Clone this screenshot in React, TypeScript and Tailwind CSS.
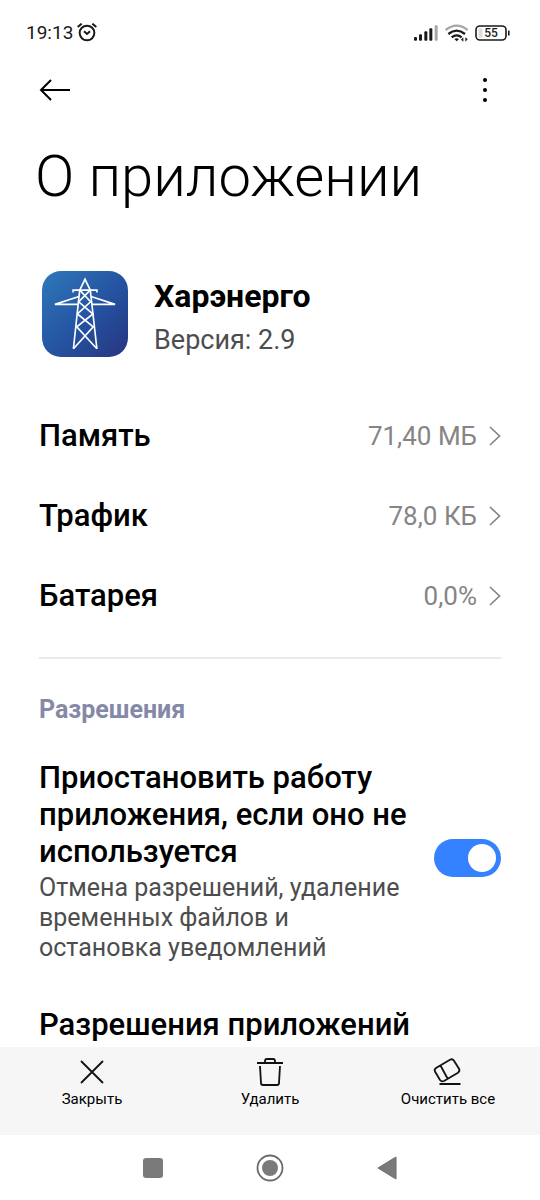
import { useState } from 'react'

const usage = [
  { label: 'Память', value: '71,40 МБ' },
  { label: 'Трафик', value: '78,0 КБ' },
  { label: 'Батарея', value: '0,0%' },
]

function StatusBar() {
  return (
    <div className="flex h-[66px] items-center justify-between pl-[26px] pr-[30px]">
      <div className="flex items-center gap-[3px]">
        <span className="text-[19px] leading-6 text-[#1a1a1a]">19:13</span>
        <svg width="22" height="20" viewBox="228 42 66 60" fill="none" stroke="#1a1a1a" strokeWidth="6">
          <circle cx="261" cy="72" r="22" />
          <path d="M233 54l12-10M289 54l-12-10M252 67l9 8 9-8" />
        </svg>
      </div>
      <div className="flex items-center gap-[7px]">
        <svg width="24" height="16" viewBox="104 46 72 48" fill="#1a1a1a">
          <rect x="104" y="82" width="9" height="11" rx="3" />
          <rect x="119" y="74" width="9" height="19" rx="3" />
          <rect x="135" y="65" width="9" height="28" rx="3" />
          <rect x="150" y="56" width="9" height="37" rx="3" />
          <rect x="166" y="47" width="9" height="46" rx="3" fill="#a6a6a6" />
        </svg>
        <svg width="23" height="18" viewBox="195 43 69 54" fill="none" strokeWidth="7">
          <path d="M197 61Q230 35 263 61" stroke="#a6a6a6" />
          <path d="M205 73Q230 53 255 73" stroke="#1a1a1a" />
          <path d="M215 83Q230 71 245 83" stroke="#1a1a1a" />
          <path d="M223 88q7-5 14 0l-7 7z" fill="#1a1a1a" />
          <path d="M243 90l7-7v13zM263 89l-7-6v13z" fill="#1a1a1a" />
        </svg>
        <svg width="35" height="16" viewBox="0 0 35 16">
          <rect x="1" y="1" width="30" height="14" rx="4" fill="none" stroke="#1a1a1a" strokeWidth="1.6" />
          <rect x="3.5" y="3.5" width="4" height="9" rx="1" fill="#dcdcdc" />
          <rect x="33" y="5.5" width="1.6" height="5" rx=".5" fill="#1a1a1a" />
          <text x="16" y="12" textAnchor="middle" fontSize="12" fontWeight="500" fill="#1a1a1a">
            55
          </text>
        </svg>
      </div>
    </div>
  )
}

function AppLogo() {
  return (
    <svg width="86" height="86" viewBox="36 33 260 260" fill="none" stroke="#fff" strokeWidth="5">
      <defs>
        <linearGradient id="logo" x1="0" y1="0" x2="1" y2="1">
          <stop offset="0" stopColor="#2f78bb" />
          <stop offset=".55" stopColor="#2452a0" />
          <stop offset="1" stopColor="#28357f" />
        </linearGradient>
      </defs>
      <rect x="36" y="33" width="260" height="260" rx="58" fill="url(#logo)" stroke="none" />
      {/* legs */}
      <path d="M131 268L150 91l16-33 16 33 20 177" />
      {/* arms */}
      <path d="M130 98v-7h72v7M148 110L75 134h71M184 110l73 24h-71" />
      {/* lattice */}
      <path d="M150 91l33 35-40 37 48 39-60 66M182 91l-35 35 43 37-49 39 61 66" />
    </svg>
  )
}

function Chevron() {
  return (
    <svg width="12" height="20" viewBox="0 0 12 20" fill="none" stroke="#858585" strokeWidth="1.7">
      <path d="M1 1l9.5 9L1 19" />
    </svg>
  )
}

function Action({ label, children }: { label: string; children: React.ReactNode }) {
  return (
    <button className="flex flex-col items-center pt-[9px] text-[15px] leading-5 text-black">
      <svg width="32" height="32" viewBox="0 0 32 32" fill="none" stroke="#111" strokeWidth="1.8">
        {children}
      </svg>
      <span className="mt-px">{label}</span>
    </button>
  )
}

export default function App() {
  const [paused, setPaused] = useState(true)

  return (
    <div className="flex min-h-screen flex-col bg-white font-['Roboto',sans-serif] text-black">
      <StatusBar />

      <header className="flex h-12 items-center justify-between px-[39px]">
        <button aria-label="Назад">
          <svg width="32" height="24" viewBox="0 0 32 24" fill="none" stroke="#000" strokeWidth="2">
            <path d="M12 2L2 12l10 10M2 12h29" />
          </svg>
        </button>
        <button aria-label="Меню" className="flex w-8 justify-center">
          <svg width="6" height="26" viewBox="0 0 6 26">
            <circle cx="3" cy="3" r="2" />
            <circle cx="3" cy="13" r="2" />
            <circle cx="3" cy="23" r="2" />
          </svg>
        </button>
      </header>

      <main className="flex-1 px-[39px]">
        <h1 className="-ml-1 mt-[30px] text-[58px] font-light leading-[64px]">О приложении</h1>

        <section className="mt-[63px] flex items-start gap-[26px] pl-[3px]">
          <AppLogo />
          <div className="pt-0.5">
            <h2 className="text-[32px] font-bold leading-[46px]">Харэнерго</h2>
            <p className="text-[27px] leading-[42px] text-[#4d4d4d]">Версия: 2.9</p>
          </div>
        </section>

        {/* Usage */}
        <div className="mt-[35px]">
          {usage.map((item) => (
            <button key={item.label} className="flex h-20 w-full items-center justify-between">
              <span className="text-[31px] font-medium">{item.label}</span>
              <span className="flex items-center gap-3 text-[26px] text-[#858585]">
                {item.value}
                <Chevron />
              </span>
            </button>
          ))}
        </div>

        <hr className="mt-[21px] border-t-2 border-[#ebebeb]" />

        {/* Permissions */}
        <h3 className="mt-[35px] text-[25px] font-bold leading-8 text-[#8589a8]">Разрешения</h3>
        <div className="mt-[33px] flex items-start justify-between">
          <label htmlFor="pause" className="w-[372px]">
            <span className="block text-[31px] font-medium leading-[37px]">
              Приостановить работу приложения, если оно не используется
            </span>
            <span className="mt-[3px] block text-[25px] leading-[30px] text-[#4d4d4d]">
              Отмена разрешений, удаление временных файлов и остановка уведомлений
            </span>
          </label>
          <input
            id="pause"
            type="checkbox"
            role="switch"
            checked={paused}
            onChange={(e) => setPaused(e.target.checked)}
            className="mt-20 flex h-[38px] w-[67px] shrink-0 appearance-none items-center rounded-full bg-gray-300 p-[5px] before:size-7 before:rounded-full before:bg-white checked:justify-end checked:bg-[#3482ff]"
          />
        </div>
        <button className="mt-[43px] block text-left text-[31px] font-medium leading-[37px]">
          Разрешения приложений
        </button>
      </main>

      <footer className="sticky bottom-0">
        <div className="grid h-[88px] grid-cols-3 bg-[#f6f6f6] px-[3px]">
          <Action label="Закрыть">
            <path d="M5 5l22 22M27 5L5 27" />
          </Action>
          <Action label="Удалить">
            <path d="M3 7h26M11 7V5q0-2 2-2h6q2 0 2 2v2M6 10l1 17q0 2 2 2h14q2 0 2-2l1-17" />
          </Action>
          <Action label="Очистить все">
            <path d="M4 12L18 3.7q2.500-1.200 4 1l5 8q1.200 2.500-1 4L12 25q-2.500 1-4-1L3 15.500q-1-2.200 1-3.500zM8.500 9.500l7 13M7.500 28h21" />
          </Action>
        </div>
        <nav className="flex h-[65px] items-center justify-center bg-white">
          <button aria-label="Недавние" className="flex w-[117px] justify-center">
            <span className="size-5 rounded-[3px] bg-[#7a7a7a]" />
          </button>
          <button aria-label="Домой" className="flex w-[117px] justify-center">
            <svg width="28" height="28" viewBox="0 0 28 28">
              <circle cx="14" cy="14" r="12.5" fill="none" stroke="#6b6b6b" strokeWidth="1.8" />
              <circle cx="14" cy="14" r="8" fill="#7a7a7a" />
            </svg>
          </button>
          <button aria-label="Назад" className="flex w-[117px] justify-center">
            <svg width="20" height="24" viewBox="0 0 20 24" fill="#7a7a7a" stroke="#6b6b6b" strokeLinejoin="round">
              <path d="M1 12L19 1v22z" />
            </svg>
          </button>
        </nav>
      </footer>
    </div>
  )
}
